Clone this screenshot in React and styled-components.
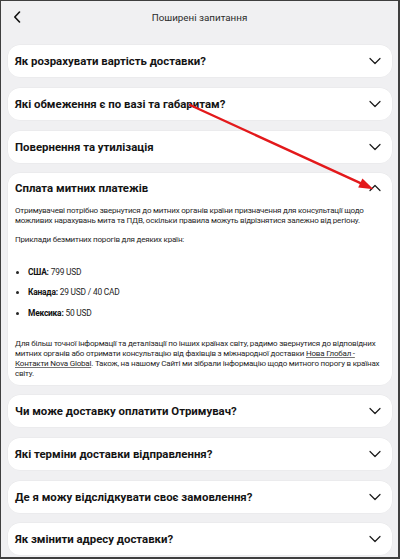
import React from "react";
import styled, { createGlobalStyle } from "styled-components";

const Global = createGlobalStyle`
  html, body { margin: 0; padding: 0; }
  body { font-family: Roboto, "Noto Sans", sans-serif; }
  * { box-sizing: border-box; }
`;

const Frame = styled.div`
  position: relative;
  width: 400px;
  height: 559px;
  overflow: hidden;
  background: #f0f0f2;
  border: 1px solid #3f3f3f;
  border-right-width: 2px;
  border-bottom-width: 2px;
`;

const Header = styled.header`
  height: 32px;
  display: grid;
  grid-template-columns: 1fr auto 1fr;
  align-items: center;
  padding: 0 12px;
`;

const BackButton = styled.button`
  justify-self: start;
  display: flex;
  align-items: center;
  padding: 0;
  border: 0;
  background: none;
  color: #111;
`;

const Title = styled.h1`
  margin: 0;
  font-size: 9.8px;
  font-weight: 400;
  color: #2b2b2b;
`;

const List = styled.div`
  display: flex;
  flex-direction: column;
  gap: 10.67px;
  padding: 12.3px 6.5px 0;
`;

const Card = styled.section`
  background: #fff;
  border-radius: 12px;
  box-shadow: 0 0 0 0.5px rgba(0, 0, 0, 0.04);
`;

const CardHead = styled.div`
  height: ${(p) => (p.$open ? "29px" : "32px")};
  display: flex;
  align-items: center;
  justify-content: space-between;
  padding: 0 10.5px 0 7.5px;
`;

const Question = styled.h2`
  margin: 0;
  font-size: 11.4px;
  font-weight: 700;
  color: #141414;
`;

const Body = styled.div`
  padding: 3.5px 12px 5.5px 7.5px;
  font-size: 8px;
  letter-spacing: -0.2px;
  line-height: 10px;
  color: #262626;
`;

const Para = styled.p`
  margin: 0 0 ${(p) => p.$mb || "0px"};
`;

const Bullets = styled.ul`
  margin: 21.5px 0;
  padding: 0 0 0 13px;
  display: flex;
  flex-direction: column;
  gap: 10.5px;
  font-size: 8.4px;
  li::marker { font-size: 8.4px; }
`;

const Strong = styled.b`
  font-weight: 700;
  color: #111;
`;

const Link = styled.a`
  color: #262626;
  text-decoration: underline;
  text-decoration-color: #777;
`;

const Overlay = styled.svg`
  position: absolute;
  left: -1px;
  top: -1px;
  pointer-events: none;
`;

const Chevron = ({ up }) => (
  <svg width="12" height="8" viewBox="0 0 12 8">
    <path
      d={up ? "M1 6.5 L6 1.5 L11 6.5" : "M1 1.5 L6 6.5 L11 1.5"}
      fill="none"
      stroke="#1a1a1a"
      strokeWidth="1.2"
      strokeLinecap="round"
      strokeLinejoin="round"
    />
  </svg>
);

const questionsTop = [
  "Як розрахувати вартість доставки?",
  "Які обмеження є по вазі та габаритам?",
  "Повернення та утилізація",
];

const questionsBottom = [
  "Чи може доставку оплатити Отримувач?",
  "Які терміни доставки відправлення?",
  "Де я можу відслідкувати своє замовлення?",
  "Як змінити адресу доставки?",
];

const Collapsed = ({ q }) => (
  <Card>
    <CardHead>
      <Question>{q}</Question>
      <Chevron />
    </CardHead>
  </Card>
);

export default function App() {
  return (
    <>
      <Global />
      <Frame>
        <Header>
          <BackButton aria-label="Назад">
            <svg width="8" height="12" viewBox="0 0 8 12">
              <path
                d="M6.5 1 L1.8 6 L6.5 11"
                fill="none"
                stroke="#111"
                strokeWidth="1.6"
                strokeLinecap="round"
                strokeLinejoin="round"
              />
            </svg>
          </BackButton>
          <Title>Поширені запитання</Title>
          <span />
        </Header>
        <List>
          {questionsTop.map((q) => (
            <Collapsed key={q} q={q} />
          ))}
          <Card>
            <CardHead $open>
              <Question>Сплата митних платежів</Question>
              <Chevron up />
            </CardHead>
            <Body>
              <Para $mb="9.5px">
                Отримувачеві потрібно звернутися до митних органів країни призначення для консультації щодо
                можливих нарахувань мита та ПДВ, оскільки правила можуть відрізнятися залежно від регіону.
              </Para>
              <Para>Приклади безмитних порогів для деяких країн:</Para>
              <Bullets>
                <li>
                  <Strong>США:</Strong> 799 USD
                </li>
                <li>
                  <Strong>Канада:</Strong> 29 USD / 40 CAD
                </li>
                <li>
                  <Strong>Мексика:</Strong> 50 USD
                </li>
              </Bullets>
              <Para>
                Для більш точної інформації та деталізації по інших країнах світу, радимо звернутися до відповідних
                митних органів або отримати консультацію від фахівців з міжнародної доставки{" "}
                <Link href="#">Нова Глобал - Контакти Nova Global</Link>. Також, на нашому Сайті ми зібрали
                інформацію щодо митного порогу в країнах світу.
              </Para>
            </Body>
          </Card>
          {questionsBottom.map((q) => (
            <Collapsed key={q} q={q} />
          ))}
        </List>
        <Overlay width="400" height="559" viewBox="0 0 400 559">
          <line x1="190" y1="105" x2="360.5" y2="183.2" stroke="#e3191b" strokeWidth="2.4" strokeLinecap="round" />
          <polygon points="373.5,189.2 358.2,187.6 362.4,178.6" fill="#e3191b" />
        </Overlay>
      </Frame>
    </>
  );
}
